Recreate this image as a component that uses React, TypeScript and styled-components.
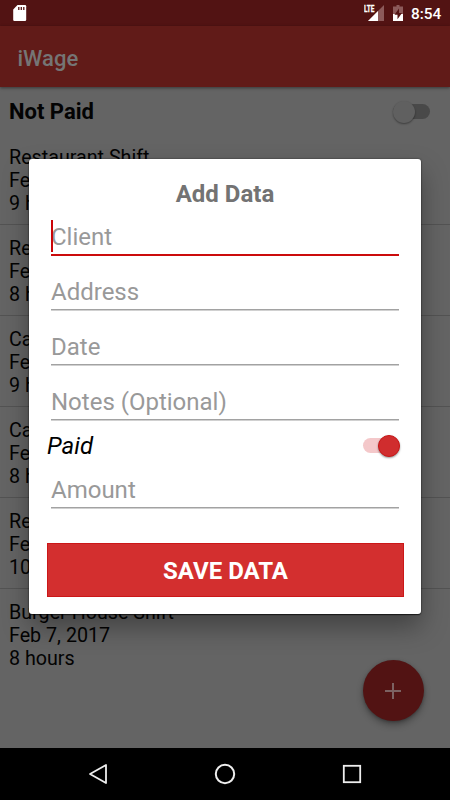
import React from "react";
import styled, { createGlobalStyle } from "styled-components";

const GlobalStyle = createGlobalStyle`
  * { box-sizing: border-box; }
  html, body { margin: 0; padding: 0; background: #000; }
  body { font-family: Roboto, sans-serif; overflow: hidden; }
`;

const Screen = styled.div`
  position: relative;
  width: 450px;
  height: 800px;
  display: flex;
  flex-direction: column;
  overflow: hidden;
  background: #646464;
  color: #030303;
`;

const StatusBar = styled.header`
  height: 26px;
  flex: none;
  display: flex;
  align-items: center;
  justify-content: space-between;
  padding: 0 8px 0 12px;
  background: #521313;
`;

const StatusIcons = styled.div`
  display: flex;
  align-items: center;
`;

const Clock = styled.span`
  width: 31px;
  margin-left: 3px;
  padding-top: 2px;
  font-size: 15.4px;
  line-height: 24px;
  font-weight: 500;
  color: #fff;
  white-space: nowrap;
`;

const AppBar = styled.div`
  height: 61px;
  flex: none;
  display: flex;
  align-items: center;
  padding: 4px 17.5px 0;
  background: #611b18;
  box-shadow: 0 1px 3px rgba(0, 0, 0, 0.45);
  z-index: 1;
`;

const AppTitle = styled.h1`
  margin: 0;
  font-size: 22px;
  line-height: 28px;
  font-weight: 500;
  color: #757575;
`;

const FilterRow = styled.div`
  height: 47px;
  flex: none;
  display: flex;
  align-items: center;
  justify-content: space-between;
  padding: 2px 20px 0 9px;
  font-size: 22px;
  font-weight: 700;
`;

const ShiftList = styled.ul`
  flex: 1;
  min-height: 0;
  margin: 0;
  padding: 0;
  list-style: none;
`;

const ShiftItem = styled.li`
  height: 91px;
  padding: 12px 9px 0;
  border-bottom: 1px solid #535353;
  font-size: 19.7px;
  line-height: 23px;
  &:last-child { border-bottom: 0; }
`;

const Line = styled.div`
  height: 23px;
  white-space: nowrap;
`;

const Track = styled.span<{ $on?: boolean }>`
  width: 37px;
  height: 15px;
  display: flex;
  align-items: center;
  justify-content: ${(p) => (p.$on ? "flex-end" : "flex-start")};
  border-radius: 8px;
  background: ${(p) => (p.$on ? "#f4c8ca" : "#494949")};
`;

const Thumb = styled.span<{ $on?: boolean }>`
  flex: none;
  width: 22px;
  height: 22px;
  border-radius: 50%;
  background: ${(p) => (p.$on ? "#d02d2e" : "#606060")};
  border: ${(p) => (p.$on ? "1px solid #c91516" : "0")};
  box-shadow: 0 1px 2px rgba(0, 0, 0, 0.4);
`;

const Fab = styled.button`
  position: absolute;
  left: 362.5px;
  top: 660px;
  width: 61px;
  height: 61px;
  display: grid;
  place-items: center;
  padding: 0;
  border: 0;
  border-radius: 50%;
  background: #521313;
  box-shadow: 0 4px 7px rgba(0, 0, 0, 0.3), 0 1px 3px rgba(0, 0, 0, 0.25);
`;

const NavBar = styled.nav`
  height: 52px;
  flex: none;
  display: grid;
  grid-template-columns: 127px 127px 127px;
  justify-content: center;
  place-items: center;
  background: #000;
`;

const Dialog = styled.section`
  position: absolute;
  left: 29px;
  top: 159px;
  width: 392px;
  height: 455px;
  padding: 19px 18px 0;
  display: flex;
  flex-direction: column;
  border-radius: 3px;
  background: #fff;
  box-shadow: 0 1px 1px rgba(0, 0, 0, 0.6), 0 0 2px rgba(0, 0, 0, 0.6),
    0 13px 26px rgba(0, 0, 0, 0.34);
`;

const DialogTitle = styled.h2`
  margin: 0;
  height: 23px;
  font-size: 24px;
  line-height: 32px;
  font-weight: 700;
  text-align: center;
  color: #737373;
`;

const Field = styled.label<{ $active?: boolean; $compact?: boolean }>`
  position: relative;
  flex: none;
  height: ${(p) => (p.$compact ? 47 : 55)}px;
  margin: 0 4px;
  padding-top: ${(p) => (p.$compact ? 14 : 22)}px;
  font-size: 24px;
  line-height: 28px;
  color: #999;
  white-space: nowrap;
  background: linear-gradient(
      ${(p) => (p.$active ? "#cb0b0c, #cb0b0c" : "#a2a2a2, #a2a2a2")}
    )
    0 calc(100% - 0.5px) / 100% ${(p) => (p.$active ? "2px" : "1.5px")} no-repeat;
`;

const Caret = styled.i`
  position: absolute;
  left: 0;
  top: 19px;
  width: 2px;
  height: 32px;
  background: #cb0508;
`;

const PaidRow = styled.div`
  flex: none;
  height: 33px;
  margin-top: 8px;
  padding-right: 3px;
  display: flex;
  align-items: center;
  justify-content: space-between;
  font-size: 24px;
  font-style: italic;
  color: #000;
`;

const SaveButton = styled.button`
  flex: none;
  width: 357px;
  height: 54px;
  margin-top: 34px;
  padding: 2px 0 0;
  border: 1px solid #cb1718;
  background: #d32f2f;
  color: #fff;
  font: 700 24px Roboto, sans-serif;
`;

const SHIFTS = [
  ["Restaurant Shift", "Feb 14, 2017", "9 hours"],
  ["Restaurant Shift", "Feb 12, 2017", "8 hours"],
  ["Cafe Shift", "Feb 10, 2017", "9 hours"],
  ["Cafe Shift", "Feb 9, 2017", "8 hours"],
  ["Restaurant Shift", "Feb 8, 2017", "10 hours"],
  ["Burger House Shift", "Feb 7, 2017", "8 hours"],
];

const Toggle = ({ on }: { on?: boolean }) => (
  <Track $on={on}>
    <Thumb $on={on} />
  </Track>
);

export default function App() {
  return (
    <>
      <GlobalStyle />
      <Screen>
        <StatusBar>
          <svg width="16" height="18" viewBox="0 0 16 18">
            <path d="M5.5 1H13a1.2 1.2 0 0 1 1.2 1.2v13.6A1.2 1.2 0 0 1 13 17H2.400a1.200 1.200 0 0 1-1.200-1.200V5.500z" fill="#fff" />
            <path d="M6.800 3v3M9.300 3v3M11.800 3v3" stroke="#521313" strokeWidth="1.3" />
          </svg>
          <StatusIcons>
            <svg width="44" height="20" viewBox="0 0 44 20">
              <path d="M20 2v16H4z" fill="#8c5a5a" />
              <path d="M14 8v10H4z" fill="#fff" />
              <rect x="0" y="1" width="10.5" height="9.500" fill="#521313" />
              <text x="0" y="9.300" fill="#fff" stroke="#fff" strokeWidth="0.300" fontSize="9.500" fontWeight="700" textLength="10.500" lengthAdjust="spacingAndGlyphs">LTE</text>
              <path d="M32.500 2h3v1.500H39V12H29V3.500h3.500z" fill="#8c5a5a" />
              <path d="M29 11h10v7H29z" fill="#fff" />
              <path d="M35 5.500l-4.500 6.200h3v4.500l4.500-6.300h-3z" fill="#521313" />
            </svg>
            <Clock>8:54</Clock>
          </StatusIcons>
        </StatusBar>
        <AppBar>
          <AppTitle>iWage</AppTitle>
        </AppBar>
        <FilterRow>
          Not Paid
          <Toggle />
        </FilterRow>
        <ShiftList>
          {SHIFTS.map((shift, i) => (
            <ShiftItem key={i}>
              {shift.map((text) => (
                <Line key={text}>{text}</Line>
              ))}
            </ShiftItem>
          ))}
        </ShiftList>
        <NavBar>
          <svg width="22" height="24" viewBox="0 0 22 24">
            <path d="M19 3v18L3 12z" fill="none" stroke="#eee" strokeWidth="1.8" strokeLinejoin="round" />
          </svg>
          <svg width="22" height="22" viewBox="0 0 22 22">
            <circle cx="11" cy="11" r="9.2" fill="none" stroke="#eee" strokeWidth="2" />
          </svg>
          <svg width="20" height="20" viewBox="0 0 20 20">
            <rect x="1.800" y="1.800" width="16.400" height="16.400" fill="none" stroke="#eee" strokeWidth="1.8" />
          </svg>
        </NavBar>
        <Fab aria-label="Add">
          <svg width="16" height="16" viewBox="0 0 16 16">
            <path d="M8 0v16M0 8h16" stroke="#7c6262" strokeWidth="2" />
          </svg>
        </Fab>
        <Dialog>
          <DialogTitle>Add Data</DialogTitle>
          <Field $active>
            Client
            <Caret />
          </Field>
          <Field>Address</Field>
          <Field>Date</Field>
          <Field>Notes (Optional)</Field>
          <PaidRow>
            Paid
            <Toggle on />
          </PaidRow>
          <Field $compact>Amount</Field>
          <SaveButton>SAVE DATA</SaveButton>
        </Dialog>
      </Screen>
    </>
  );
}
